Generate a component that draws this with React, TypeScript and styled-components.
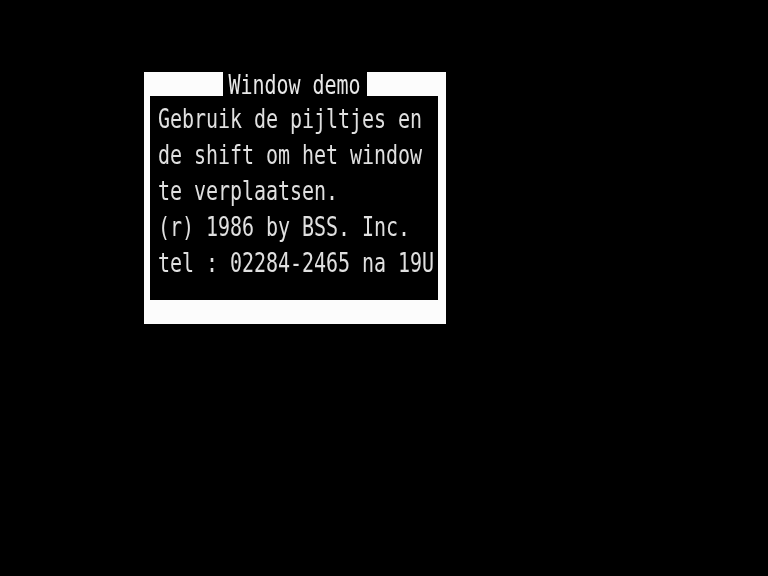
import React from "react";
import styled, { createGlobalStyle } from "styled-components";

const Global = createGlobalStyle`
  html, body {
    margin: 0;
    padding: 0;
    background: #000;
  }
  #root {
    width: 768px;
    height: 576px;
    background: #000;
    overflow: hidden;
  }
`;

const Screen = styled.div`
  width: 768px;
  height: 576px;
  background: #000;
  padding: 72px 0 0 144px;
  box-sizing: border-box;
  font-family: "DejaVu Sans Mono", "Liberation Mono", monospace;
  filter: blur(0.5px);
`;

const Frame = styled.div`
  width: 302px;
  background: #fcfcfc;
  display: flex;
  flex-direction: column;
`;

const TitleBar = styled.div`
  height: 24px;
  display: flex;
  justify-content: center;
`;

const TitleLabel = styled.div`
  background: #000;
  color: #e8e8e8;
  height: 24px;
  padding: 0 6px 0 5px;
  position: relative;
  z-index: 1;
`;

const Text = styled.div`
  font-size: 20px;
  line-height: 20px;
  letter-spacing: -0.04px;
  white-space: pre;
  transform: scaleY(1.3);
  transform-origin: 0 0;
`;

const Body = styled.div`
  background: #000;
  margin: 0 8px 0 6px;
  height: 204px;
  box-sizing: border-box;
  padding: 10px 0 0 8px;
  color: #e0e0e0;
  display: flex;
  flex-direction: column;
`;

const Line = styled.div`
  height: 36px;
  flex: none;
`;

const BottomBar = styled.div`
  height: 24px;
`;

const lines = [
  "Gebruik de pijltjes en",
  "de shift om het window",
  "te verplaatsen.",
  "(r) 1986 by BSS. Inc.",
  "tel : 02284-2465 na 19U",
];

export default function App() {
  return (
    <>
      <Global />
      <Screen>
        <Frame>
          <TitleBar>
            <TitleLabel>
              <Text>Window demo</Text>
            </TitleLabel>
          </TitleBar>
          <Body>
            {lines.map((l) => (
              <Line key={l}>
                <Text>{l}</Text>
              </Line>
            ))}
          </Body>
          <BottomBar />
        </Frame>
      </Screen>
    </>
  );
}
